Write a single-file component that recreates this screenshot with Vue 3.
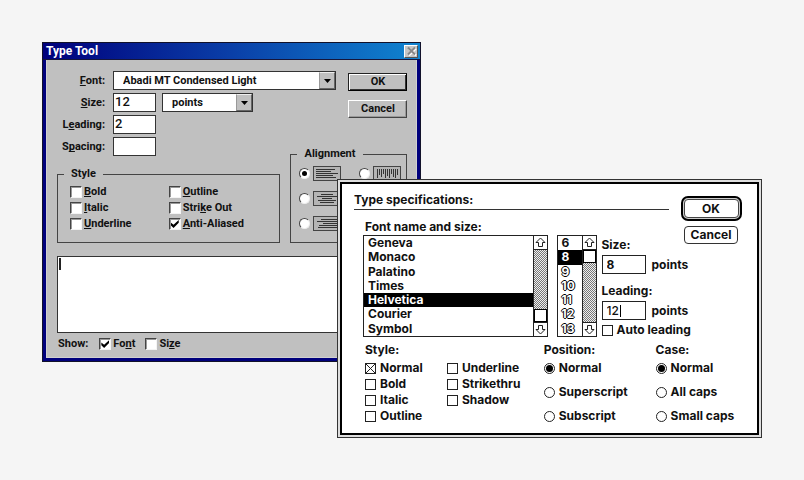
<script setup>
import { ref } from 'vue'

const winFont = ref('Abadi MT Condensed Light')
const winSize = ref('12')
const winUnit = ref('points')
const winLeading = ref('2')
const winSpacing = ref('')
const sample = ref('')
const showFont = ref(true)
const showSize = ref(false)

// Each label is split around its mnemonic letter.
const winStyles = ref([
  { id: 'bold', parts: ['', 'B', 'old'], on: false },
  { id: 'outline', parts: ['', 'O', 'utline'], on: false },
  { id: 'italic', parts: ['', 'I', 'talic'], on: false },
  { id: 'strike', parts: ['Stri', 'k', 'e Out'], on: false },
  { id: 'underline', parts: ['', 'U', 'nderline'], on: false },
  { id: 'antialias', parts: ['', 'A', 'nti-Aliased'], on: true },
])

const lines = {
  left: [[3, 22], [3, 18], [3, 25], [3, 20], [3, 23]],
  center: [[8, 20], [4, 24], [9, 19], [5, 23], [7, 21]],
  right: [[8, 25], [4, 25], [10, 25], [6, 25], [5, 25]],
}
const columns = {
  top: [12, 9, 11, 8, 12, 10, 12, 8, 11, 12, 9],
  middle: [10, 12, 9, 11, 12, 10, 12, 9, 11, 10, 12],
  bottom: [12, 10, 11, 12, 9, 12, 10, 11, 12, 9, 12],
}
const horizontal = (rows) => rows.map(([a, b], i) => `M${a} ${3.5 + i * 2}H${b}`).join('')
const vertical = (cols) => cols.map((b, i) => `M${4.5 + i * 2} 3V${b}`).join('')
const alignments = [
  { id: 'left', d: horizontal(lines.left) },
  { id: 'top', d: vertical(columns.top) },
  { id: 'center', d: horizontal(lines.center) },
  { id: 'middle', d: vertical(columns.middle) },
  { id: 'right', d: horizontal(lines.right) },
  { id: 'bottom', d: vertical(columns.bottom) },
]
const alignment = ref('left')

const fonts = ['Geneva', 'Monaco', 'Palatino', 'Times', 'Helvetica', 'Courier', 'Symbol']
const font = ref('Helvetica')
const sizes = ['6', '8', '9', '10', '11', '12', '13']
const size = ref('8')
const leading = ref('12')
const autoLeading = ref(false)

const macStyles = ref([
  { name: 'Normal', on: true },
  { name: 'Bold', on: false },
  { name: 'Italic', on: false },
  { name: 'Outline', on: false },
  { name: 'Underline', on: false },
  { name: 'Strikethru', on: false },
  { name: 'Shadow', on: false },
])
const positions = ['Normal', 'Superscript', 'Subscript']
const position = ref('Normal')
const cases = ['Normal', 'All caps', 'Small caps']
const letterCase = ref('Normal')
</script>

<template>
  <main class="desktop">
    <section class="win" aria-labelledby="win-title">
      <header class="win-bar">
        <h2 id="win-title">Type Tool</h2>
        <button class="win-close" type="button" aria-label="Close">
          <svg width="11" height="10" viewBox="0 0 11 10"><path d="M2 1.5L9 8.5M9 1.5L2 8.5" stroke="#fff" stroke-width="2" transform="translate(1 1)" /><path d="M2 1.5L9 8.5M9 1.5L2 8.5" stroke="#888" stroke-width="2" /></svg>
        </button>
      </header>
      <form class="win-body" @submit.prevent>
        <div class="win-top">
          <div class="win-fields">
            <label for="w-font"><u>F</u>ont:</label>
            <div class="drop drop-wide">
              <select id="w-font" v-model="winFont"><option>Abadi MT Condensed Light</option></select>
              <span class="drop-arrow"><svg width="7" height="4" viewBox="0 0 7 4"><path d="M0 0H7L3.5 4Z" /></svg></span>
            </div>
            <label for="w-size"><u>S</u>ize:</label>
            <div class="pair">
              <input id="w-size" v-model="winSize" class="win-input" type="text" />
              <div class="drop drop-unit">
                <select v-model="winUnit" aria-label="Unit"><option>points</option></select>
                <span class="drop-arrow"><svg width="7" height="4" viewBox="0 0 7 4"><path d="M0 0H7L3.5 4Z" /></svg></span>
              </div>
            </div>
            <label for="w-leading">L<u>e</u>ading:</label>
            <input id="w-leading" v-model="winLeading" class="win-input" type="text" />
            <label for="w-spacing">S<u>p</u>acing:</label>
            <input id="w-spacing" v-model="winSpacing" class="win-input" type="text" />
          </div>
          <div class="win-buttons">
            <button class="win-button primary" type="submit">OK</button>
            <button class="win-button" type="button">Cancel</button>
          </div>
          <fieldset class="group style-group">
            <legend>Style</legend>
            <div class="style-grid">
              <label v-for="s in winStyles" :key="s.id" class="win-option">
                <input v-model="s.on" class="win-check" type="checkbox" />
                <span>{{ s.parts[0] }}<u>{{ s.parts[1] }}</u>{{ s.parts[2] }}</span>
              </label>
            </div>
          </fieldset>
          <fieldset class="group align-group">
            <legend>Alignment</legend>
            <div class="align-grid">
              <label v-for="a in alignments" :key="a.id" class="align-option">
                <input v-model="alignment" class="win-radio" type="radio" name="alignment" :value="a.id" :aria-label="a.id" />
                <svg width="28" height="15" viewBox="0 0 28 15">
                  <rect x=".5" y=".5" width="27" height="14" fill="#b4b4b4" stroke="#444" />
                  <path :d="a.d" stroke="#333" fill="none" />
                </svg>
              </label>
            </div>
          </fieldset>
        </div>
        <div class="sample">
          <textarea v-model="sample" aria-label="Text"></textarea>
          <span class="sample-caret"></span>
        </div>
        <div class="win-show">
          <span class="show-label">Show:</span>
          <label class="win-option"><input v-model="showFont" class="win-check" type="checkbox" /><span>Fo<u>n</u>t</span></label>
          <label class="win-option"><input v-model="showSize" class="win-check" type="checkbox" /><span>Si<u>z</u>e</span></label>
        </div>
      </form>
    </section>

    <section class="mac" aria-labelledby="mac-title">
      <form class="mac-body" @submit.prevent>
        <h2 id="mac-title" class="mac-title">Type specifications:</h2>
        <div class="mac-buttons">
          <button class="mac-ok" type="submit"><span>OK</span></button>
          <button class="mac-cancel" type="button">Cancel</button>
        </div>
        <div class="mac-main">
          <div class="font-col">
            <span id="font-label" class="font-label">Font name and size:</span>
            <div class="list">
              <ul role="listbox" aria-labelledby="font-label">
                <li v-for="f in fonts" :key="f" role="option" :aria-selected="f === font" :class="{ selected: f === font }" @click="font = f">{{ f }}</li>
              </ul>
              <div class="scroll">
                <button type="button" aria-label="Scroll fonts up"><svg width="11" height="11" viewBox="0 0 11 11"><path d="M5.5 1L10 5.5H7.5V9.5H3.5V5.5H1Z" /></svg></button>
                <div class="track at-end"><span class="thumb"></span></div>
                <button type="button" aria-label="Scroll fonts down"><svg width="11" height="11" viewBox="0 0 11 11"><path d="M5.5 10L10 5.5H7.5V1.5H3.5V5.5H1Z" /></svg></button>
              </div>
            </div>
          </div>
          <div class="list size-list">
            <ul role="listbox" aria-label="Sizes">
              <li v-for="(s, i) in sizes" :key="s" role="option" :aria-selected="s === size" :class="{ selected: s === size, hollow: i > 1 }" @click="size = s">{{ s }}</li>
            </ul>
            <div class="scroll">
              <button type="button" aria-label="Scroll sizes up"><svg width="11" height="11" viewBox="0 0 11 11"><path d="M5.5 1L10 5.5H7.5V9.5H3.5V5.5H1Z" /></svg></button>
              <div class="track"><span class="thumb"></span></div>
              <button type="button" aria-label="Scroll sizes down"><svg width="11" height="11" viewBox="0 0 11 11"><path d="M5.5 10L10 5.5H7.5V1.5H3.5V5.5H1Z" /></svg></button>
            </div>
          </div>
          <div class="measures">
            <label for="m-size">Size:</label>
            <div class="measure"><input id="m-size" v-model="size" type="text" /><span>points</span></div>
            <label for="m-leading" class="leading-label">Leading:</label>
            <div class="measure">
              <input id="m-leading" v-model="leading" class="light" type="text" /><span class="measure-caret"></span><span>points</span>
            </div>
            <label class="mac-option auto"><input v-model="autoLeading" class="mac-check" type="checkbox" />Auto leading</label>
          </div>
        </div>
        <div class="mac-sets">
          <fieldset>
            <legend>Style:</legend>
            <div class="mac-styles">
              <label v-for="s in macStyles" :key="s.name" class="mac-option"><input v-model="s.on" class="mac-check" type="checkbox" />{{ s.name }}</label>
            </div>
          </fieldset>
          <fieldset>
            <legend>Position:</legend>
            <div class="mac-radios">
              <label v-for="p in positions" :key="p" class="mac-option"><input v-model="position" class="mac-radio" type="radio" name="position" :value="p" />{{ p }}</label>
            </div>
          </fieldset>
          <fieldset>
            <legend>Case:</legend>
            <div class="mac-radios">
              <label v-for="c in cases" :key="c" class="mac-option"><input v-model="letterCase" class="mac-radio" type="radio" name="case" :value="c" />{{ c }}</label>
            </div>
          </fieldset>
        </div>
      </form>
    </section>
  </main>
</template>

<style>
body {
  background: #f5f5f5;
}
</style>

<style scoped>
* {
  box-sizing: border-box;
}
.desktop {
  position: relative;
  min-height: 100vh;
  overflow: hidden;
  background: #f5f5f5;
}
h2, ul, fieldset, legend, input, button, select, textarea {
  margin: 0;
  padding: 0;
  font: inherit;
  color: inherit;
}
input, select, button, textarea {
  appearance: none;
  border-radius: 0;
  outline: none;
}
input, svg {
  flex: none;
}
svg {
  display: block;
}
u {
  text-underline-offset: 1px;
  text-decoration-skip-ink: none;
}

/* Windows dialog */
.win {
  position: absolute;
  left: 42px;
  top: 42px;
  width: 47.2%;
  min-width: 379px;
  border: 1px solid #11112a;
  background: #00007c;
  color: #111;
  font: bold 11px/14px Roboto, "Liberation Sans", sans-serif;
}
.win-bar {
  display: flex;
  align-items: center;
  justify-content: space-between;
  height: 17px;
  padding: 0 2px 0 3px;
  border-bottom: 1px solid #15153a;
  background: linear-gradient(90deg, #00007c, #0a3fa8 50%, #1084d0);
  color: #fff;
}
.win-bar h2 {
  font-size: 12px;
}
.win-close {
  display: grid;
  place-items: center;
  width: 14px;
  height: 13px;
  border: 1px solid;
  border-color: #fff #555 #555 #fff;
  background: #c6c6c6;
}
.win-body {
  margin: 0 3px 3px;
  padding: 11px 9px 6px 10px;
  border: 1px solid #d0d0d0;
  border-top: 0;
  background: #c0c0c0;
}
.win-top {
  display: grid;
  grid-template-columns: 1fr 117px;
  grid-template-rows: 76px 20px auto;
  column-gap: 10px;
}
.win-fields {
  grid-area: 1 / 1 / 3 / 3;
  display: grid;
  grid-template-columns: 48px auto;
  grid-auto-rows: 19px;
  gap: 3px 8px;
  align-items: center;
  justify-content: start;
}
.win-fields label {
  text-align: right;
}
.pair {
  display: flex;
  gap: 6px;
}
.win-input {
  width: 43px;
  height: 19px;
  padding: 0 1px 2px;
  border: 1px solid #333;
  background: #fff;
  font-size: 13px;
  font-weight: 500;
}
.drop {
  display: grid;
  height: 19px;
  border: 1px solid #333;
  background: #fff;
}
.drop-wide {
  width: 223px;
}
.drop-unit {
  width: 91px;
}
.drop select {
  grid-area: 1 / 1;
  width: 100%;
  padding-left: 9px;
  border: 0;
  background: none;
}
.drop-arrow {
  grid-area: 1 / 1;
  justify-self: end;
  display: grid;
  place-items: center;
  width: 16px;
  border: 1px solid;
  border-color: #eee #666 #666 #999;
  background: #c0c0c0;
  pointer-events: none;
}
.win-buttons {
  grid-area: 1 / 2;
  justify-self: end;
  display: flex;
  flex-direction: column;
  gap: 9px;
  padding-top: 2px;
}
.win-button {
  width: 59px;
  height: 18px;
  border: 1px solid;
  border-color: #fff #444 #444 #fff;
  box-shadow: inset -1px -1px #999;
  background: #c0c0c0;
  text-align: center;
}
.primary {
  border-color: #222 #000 #000 #222;
  box-shadow: inset 1px 1px #fff, inset -1px -1px #333;
}
.group {
  min-width: 0;
  border: 1px solid #444;
}
.group legend {
  padding: 0 7px;
}
.style-group {
  grid-area: 3 / 1;
  padding: 3px 12px 10px 6px;
}
.style-grid {
  display: grid;
  grid-template-columns: 1fr 1fr;
  grid-auto-rows: 16px;
  padding-left: 6px;
}
.win-option {
  display: flex;
  align-items: center;
  gap: 2px;
}
.win-check {
  display: grid;
  place-items: center;
  width: 12px;
  height: 12px;
  border: 1px solid;
  border-color: #444 #f4f4f4 #f4f4f4 #444;
  box-shadow: inset 1px 1px #999;
  background: #fff;
}
.win-check:checked::before {
  content: "";
  width: 8px;
  height: 8px;
  background: #000;
  clip-path: polygon(0 30%, 35% 60%, 100% 0, 100% 35%, 35% 100%, 0 65%);
}
.align-group {
  grid-area: 2 / 2 / 4 / 3;
  padding: 5px 5px 0 6px;
}
.align-grid {
  display: grid;
  grid-template-columns: 1fr auto;
  row-gap: 10px;
  padding-left: 2px;
}
.align-option {
  display: flex;
  align-items: center;
  gap: 3px;
}
.win-radio {
  display: grid;
  place-items: center;
  width: 11px;
  height: 11px;
  border: 1px solid;
  border-color: #444 #eee #eee #444;
  border-radius: 50%;
  background: #fff;
}
.win-radio:checked::before {
  content: "";
  width: 5px;
  height: 5px;
  border-radius: 50%;
  background: #000;
}
.sample {
  position: relative;
  display: grid;
  margin-top: 13px;
}
.sample textarea {
  height: 77px;
  border: 1px solid #333;
  background: #fff;
  resize: none;
}
.sample-caret {
  position: absolute;
  left: 2px;
  top: 2px;
  width: 2px;
  height: 12px;
  background: #222;
}
.win-show {
  display: flex;
  align-items: center;
  gap: 10px;
  margin-top: 4px;
}
.show-label {
  padding: 0 1px;
}

/* Macintosh dialog */
.mac {
  position: absolute;
  left: 337px;
  top: 179px;
  width: 52.8%;
  min-width: 424px;
  padding: 2px;
  border: 1px solid #333;
  background: #dedede;
  color: #111;
  font: bold 12px/14px Inter, "Liberation Sans", sans-serif;
}
.mac-body {
  display: grid;
  grid-template-columns: 1fr 61px;
  grid-template-rows: 17px auto auto;
  column-gap: 12px;
  padding: 9px 15px 9px 12px;
  border: 2px solid #000;
  background: #fff;
}
.mac-title {
  border-bottom: 1px solid #333;
}
.mac-buttons {
  grid-area: 1 / 2 / 3 / 3;
  display: flex;
  flex-direction: column;
  align-items: center;
  align-self: start;
  gap: 5px;
  padding-top: 3px;
}
.mac-ok {
  display: grid;
  width: 61px;
  height: 25px;
  padding: 1px;
  border: 2px solid #000;
  border-radius: 7px;
  background: #ccc;
}
.mac-ok span {
  border: 1px solid #444;
  border-radius: 4px;
  background: #fff;
  line-height: 17px;
}
.mac-cancel {
  width: 54px;
  height: 18px;
  border: 1px solid #333;
  border-radius: 4px;
  background: #fff;
}
.mac-main {
  grid-area: 2 / 1 / 3 / 3;
  display: flex;
  align-items: flex-end;
  padding: 10px 0 0 9px;
}
.font-col {
  flex: 1;
  display: flex;
  flex-direction: column;
  gap: 1px;
}
.font-label {
  padding-left: 2px;
}
.list {
  display: flex;
  height: 102px;
  border: 1px solid #222;
  background: #fff;
}
.list ul {
  flex: 1;
  display: grid;
  grid-auto-rows: 1fr;
  list-style: none;
}
.list li {
  padding-left: 4px;
}
.list .selected {
  background: #000;
  color: #fff;
}
.list .hollow:not(.selected) {
  color: #fff;
  text-shadow: 1px 0 #000, -1px 0 #000, 0 1px #000, 0 -1px #000;
}
.size-list {
  width: 40px;
  margin: 0 5px 0 9px;
}
.scroll {
  display: flex;
  flex-direction: column;
  width: 14px;
  border-left: 1px solid #222;
}
.scroll button {
  display: grid;
  place-items: center;
  height: 13px;
  border: 0;
  background: #fff;
}
.scroll path {
  fill: #fff;
  stroke: #222;
}
.track {
  flex: 1;
  display: flex;
  flex-direction: column;
  border: solid #222;
  border-width: 1px 0;
  background: repeating-conic-gradient(#777 0 25%, #eee 0 50%) 0 0 / 2px 2px;
}
.at-end {
  justify-content: flex-end;
}
.thumb {
  height: 13px;
  border: 1px solid #000;
  background: #fff;
}
.measures {
  display: flex;
  flex-direction: column;
  align-items: flex-start;
  gap: 3px;
  width: 140px;
}
.leading-label {
  margin-top: 7px;
}
.measure {
  position: relative;
  display: flex;
  align-items: center;
  gap: 6px;
}
.measure input {
  width: 44px;
  height: 19px;
  padding: 0 4px;
  border: 1px solid #222;
  background: #fff;
}
.measure .light {
  font-weight: 500;
}
.measure-caret {
  position: absolute;
  left: 18px;
  top: 4px;
  width: 1px;
  height: 12px;
  background: #000;
}
.mac-option {
  display: flex;
  align-items: center;
  gap: 4px;
  white-space: nowrap;
}
.mac-check {
  width: 11px;
  height: 11px;
  border: 1px solid #222;
  background: #fff;
}
.mac-check:checked {
  background:
    linear-gradient(45deg, transparent 46%, #222 46% 54%, transparent 54%),
    linear-gradient(-45deg, #fff 46%, #222 46% 54%, #fff 54%);
}
.mac-radio {
  display: grid;
  place-items: center;
  width: 11px;
  height: 11px;
  border: 1px solid #222;
  border-radius: 50%;
  background: #fff;
}
.mac-radio:checked::before {
  content: "";
  width: 7px;
  height: 7px;
  border-radius: 50%;
  background: #000;
}
.mac-sets {
  grid-area: 3 / 1 / 4 / 3;
  display: grid;
  grid-template-columns: 179fr 112fr 86fr;
  padding: 6px 0 0 11px;
}
.mac-sets fieldset {
  min-width: 0;
  border: 0;
}
.mac-styles {
  display: grid;
  grid-template-columns: 82fr 97fr;
  grid-template-rows: repeat(4, 16px);
  grid-auto-flow: column;
  padding-top: 3px;
}
.mac-radios {
  display: grid;
  grid-auto-rows: 16px;
  gap: 8px;
  padding-top: 3px;
}
</style>
